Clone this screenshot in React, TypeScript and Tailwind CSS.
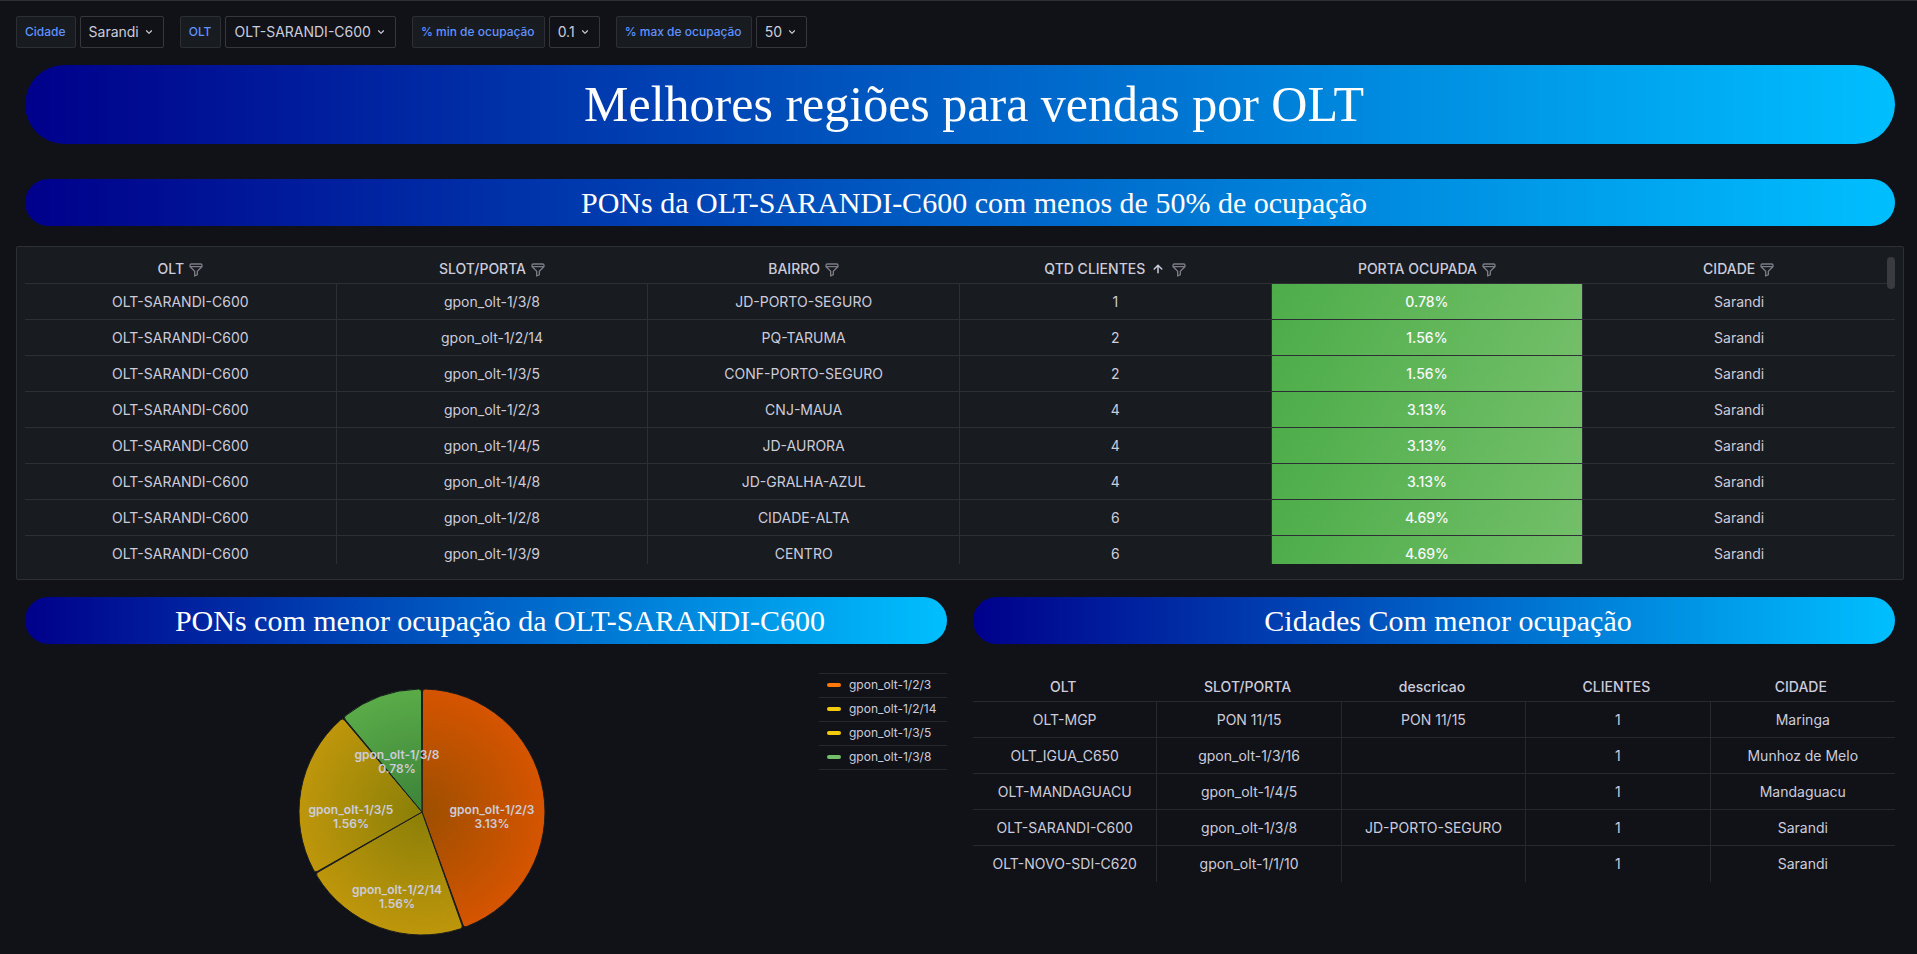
import type { ReactNode } from "react";

const variables = [
  { id: "cidade", label: "Cidade", value: "Sarandi" },
  { id: "olt", label: "OLT", value: "OLT-SARANDI-C600" },
  { id: "min", label: "% min de ocupação", value: "0.1" },
  { id: "max", label: "% max de ocupação", value: "50" },
];

const ponColumns = ["OLT", "SLOT/PORTA", "BAIRRO", "QTD CLIENTES", "PORTA OCUPADA", "CIDADE"];

const ponRows = [
  ["OLT-SARANDI-C600", "gpon_olt-1/3/8", "JD-PORTO-SEGURO", "1", "0.78%", "Sarandi"],
  ["OLT-SARANDI-C600", "gpon_olt-1/2/14", "PQ-TARUMA", "2", "1.56%", "Sarandi"],
  ["OLT-SARANDI-C600", "gpon_olt-1/3/5", "CONF-PORTO-SEGURO", "2", "1.56%", "Sarandi"],
  ["OLT-SARANDI-C600", "gpon_olt-1/2/3", "CNJ-MAUA", "4", "3.13%", "Sarandi"],
  ["OLT-SARANDI-C600", "gpon_olt-1/4/5", "JD-AURORA", "4", "3.13%", "Sarandi"],
  ["OLT-SARANDI-C600", "gpon_olt-1/4/8", "JD-GRALHA-AZUL", "4", "3.13%", "Sarandi"],
  ["OLT-SARANDI-C600", "gpon_olt-1/2/8", "CIDADE-ALTA", "6", "4.69%", "Sarandi"],
  ["OLT-SARANDI-C600", "gpon_olt-1/3/9", "CENTRO", "6", "4.69%", "Sarandi"],
];

const cityColumns = ["OLT", "SLOT/PORTA", "descricao", "CLIENTES", "CIDADE"];

const cityRows = [
  ["OLT-MGP", "PON 11/15", "PON 11/15", "1", "Maringa"],
  ["OLT_IGUA_C650", "gpon_olt-1/3/16", "", "1", "Munhoz de Melo"],
  ["OLT-MANDAGUACU", "gpon_olt-1/4/5", "", "1", "Mandaguacu"],
  ["OLT-SARANDI-C600", "gpon_olt-1/3/8", "JD-PORTO-SEGURO", "1", "Sarandi"],
  ["OLT-NOVO-SDI-C620", "gpon_olt-1/1/10", "", "1", "Sarandi"],
];

const slices = [
  { name: "gpon_olt-1/2/3", value: 3.13, fill: "url(#pie-orange)", swatch: "bg-[#ff780a]", x: 193, y: 125 },
  { name: "gpon_olt-1/2/14", value: 1.56, fill: "url(#pie-yellow)", swatch: "bg-[#f2cc0c]", x: 98, y: 205 },
  { name: "gpon_olt-1/3/5", value: 1.56, fill: "url(#pie-yellow)", swatch: "bg-[#f2cc0c]", x: 52, y: 125 },
  { name: "gpon_olt-1/3/8", value: 0.78, fill: "url(#pie-green)", swatch: "bg-[#73bf69]", x: 98, y: 70 },
];

function Icon({ path, className }: { path: string; className: string }) {
  return (
    <svg viewBox="0 0 24 24" fill="currentColor" aria-hidden="true" className={className}>
      <path d={path} />
    </svg>
  );
}

const FILTER =
  "M19,2H5A3,3,0,0,0,2,5V6.17a3,3,0,0,0,.25,1.2l0,.06a2.81,2.81,0,0,0,.59.86L9,14.41V21a1,1,0,0,0,.47.85A1,1,0,0,0,10,22a1,1,0,0,0,.45-.11l4-2A1,1,0,0,0,15,19V14.41l6.12-6.12a2.81,2.81,0,0,0,.59-.86l0-.06A3,3,0,0,0,22,6.17V5A3,3,0,0,0,19,2ZM13.29,13.29A1,1,0,0,0,13,14v4.38l-2,1V14a1,1,0,0,0-.29-.71L5.41,8H18.59ZM20,6H4V5A1,1,0,0,1,5,4H19a1,1,0,0,1,1,1Z";
const ARROW_UP =
  "M17.71,11.29l-5-5a1,1,0,0,0-.33-.21,1,1,0,0,0-.76,0,1,1,0,0,0-.33.21l-5,5a1,1,0,0,0,1.42,1.42L11,9.41V17a1,1,0,0,0,2,0V9.41l3.29,3.3a1,1,0,0,0,1.42,0A1,1,0,0,0,17.71,11.29Z";
const ANGLE_DOWN =
  "M17,9.17a1,1,0,0,0-1.41,0L12,12.71,8.46,9.17a1,1,0,0,0-1.41,0,1,1,0,0,0,0,1.42l4.24,4.24a1,1,0,0,0,1.42,0L17,10.59A1,1,0,0,0,17,9.17Z";

function Variable({ id, label, value }: { id: string; label: string; value: string }) {
  return (
    <div className="flex gap-1">
      <label
        htmlFor={id}
        className="flex h-8 items-center rounded-xs border border-[#2d2f34] bg-[#181b1f] pr-[9px] pl-2 text-xs font-medium text-[#5f92ff]"
      >
        {label}
      </label>
      <div className="relative flex">
        <select
          id={id}
          defaultValue={value}
          className="field-sizing-content h-8 appearance-none rounded-xs border border-[#36373c] bg-[#111217] pr-6 pl-2 text-sm"
        >
          <option>{value}</option>
        </select>
        <Icon path={ANGLE_DOWN} className="pointer-events-none absolute top-[9px] right-2 size-[14px]" />
      </div>
    </div>
  );
}

function Banner({ children, large = false }: { children: ReactNode; large?: boolean }) {
  const size = large ? "h-[79px] text-[50px]" : "h-[47px] pt-0.5 text-[30px]";
  const classes = `${size} flex items-center justify-center rounded-full bg-[linear-gradient(90deg,#00008b,#00bfff)] pl-7 font-['Liberation_Serif',serif] text-white`;
  return large ? <h1 className={classes}>{children}</h1> : <h2 className={classes}>{children}</h2>;
}

function point(angle: number, radius: number) {
  return `${123 + radius * Math.sin(angle)} ${123 - radius * Math.cos(angle)}`;
}

function Pie() {
  const total = slices.reduce((sum, s) => sum + s.value, 0);
  let angle = 0;
  const shapes = slices.map((s) => {
    const start = angle;
    angle += (s.value / total) * 2 * Math.PI;
    const r = 123;
    const gap = 0.004;
    const corner = 0.024;
    const a = start + gap;
    const b = angle - gap;
    const large = b - a > Math.PI ? 1 : 0;
    const d = `M123 123 L${point(a, r - 3)} Q${point(a, r)} ${point(a + corner, r)} A${r} ${r} 0 ${large} 1 ${point(b - corner, r)} Q${point(b, r)} ${point(b, r - 3)} Z`;
    return <path key={s.name} d={d} fill={s.fill} stroke="#181b1f" strokeWidth="1" />;
  });
  return (
    <svg viewBox="0 0 246 246" role="img" aria-label="Ocupação por PON" className="size-[246px] overflow-visible">
      <defs>
        <radialGradient id="pie-orange" gradientUnits="userSpaceOnUse" cx="123" cy="123" r="123">
          <stop offset="0" stopColor="#9c4f00" />
          <stop offset="1" stopColor="#d65400" />
        </radialGradient>
        <radialGradient id="pie-yellow" gradientUnits="userSpaceOnUse" cx="123" cy="123" r="123">
          <stop offset="0" stopColor="#8a7f08" />
          <stop offset="1" stopColor="#be960b" />
        </radialGradient>
        <radialGradient id="pie-green" gradientUnits="userSpaceOnUse" cx="123" cy="123" r="123">
          <stop offset="0" stopColor="#3c8239" />
          <stop offset="1" stopColor="#5aab48" />
        </radialGradient>
      </defs>
      {shapes}
      <g fill="#ccccdc" textAnchor="middle" className="text-xs font-semibold">
        {slices.map((s) => (
          <text key={s.name} x={s.x} y={s.y}>
            <tspan>{s.name}</tspan>
            <tspan x={s.x} dy="14">
              {s.value}%
            </tspan>
          </text>
        ))}
      </g>
    </svg>
  );
}

export default function App() {
  return (
    <div className="min-h-screen border-t border-[#2e3036] bg-[#111217] pt-[15px] pr-[13px] pl-4 font-['Inter',sans-serif] text-sm text-[#ccccdc]">
      <nav className="flex flex-wrap gap-4">
        {variables.map((v) => (
          <Variable key={v.id} {...v} />
        ))}
      </nav>

      <header className="mx-[9px] mt-[17px] flex flex-col gap-[35px]">
        <Banner large>Melhores regiões para vendas por OLT</Banner>
        <Banner>PONs da OLT-SARANDI-C600 com menos de 50% de ocupação</Banner>
      </header>

      <section className="relative mt-5 rounded-xs border border-[#2d2f34] bg-[#181b1f] px-2 pt-2 pb-[15px]">
        <div className="h-[309px] overflow-hidden">
          <table className="w-full table-fixed border-separate border-spacing-0 text-center">
            <thead>
              <tr className="h-[29px]">
                {ponColumns.map((c) => (
                  <th key={c} className="border-b border-[#2d2f34] p-0 font-medium">
                    <div className="flex items-center justify-center gap-1">
                      <button type="button" className="flex items-center gap-1">
                        {c}
                        {c === "QTD CLIENTES" && <Icon path={ARROW_UP} className="size-[18px]" />}
                      </button>
                      <button type="button" aria-label={`Filtrar ${c}`} className="pt-0.5 text-[#7b7c86]">
                        <Icon path={FILTER} className="size-4" />
                      </button>
                    </div>
                  </th>
                ))}
              </tr>
            </thead>
            <tbody>
              {ponRows.map((row) => (
                <tr key={row[1]} className="h-9">
                  {row.map((cell, i) => (
                    <td
                      key={i}
                      className={
                        i === 4
                          ? "border-r border-b border-[#2d2f34] bg-[linear-gradient(120deg,#4dad49,#73bf69)] bg-clip-padding p-0 font-medium text-[#f7f8fa]"
                          : "border-r border-b border-[#2d2f34] p-0 last:border-r-0"
                      }
                    >
                      {cell}
                    </td>
                  ))}
                </tr>
              ))}
            </tbody>
          </table>
        </div>
        <div className="absolute top-[10px] right-2 h-8 w-2 rounded-full bg-[#393b40]" />
      </section>

      <div className="mx-[9px] mt-[17px] grid grid-cols-2 gap-[26px]">
        <section>
          <Banner>PONs com menor ocupação da OLT-SARANDI-C600</Banner>
          <div className="mt-[29px] flex items-start">
            <div className="flex h-[278px] flex-1 items-center justify-center">
              <Pie />
            </div>
            <ul className="w-32 border-t border-[#26282d] text-xs">
              {slices.map((s) => (
                <li key={s.name} className="flex h-6 items-center gap-2 border-b border-[#26282d] pb-px pl-2">
                  <span className={`${s.swatch} h-1 w-[14px] rounded-full`} />
                  {s.name}
                </li>
              ))}
            </ul>
          </div>
        </section>

        <section>
          <Banner>Cidades Com menor ocupação</Banner>
          <table className="mt-[29px] w-full table-fixed border-separate border-spacing-0 text-center">
            <thead>
              <tr className="h-[29px]">
                {cityColumns.map((c) => (
                  <th key={c} className="border-b border-[#26282d] p-0 pr-1 font-medium">
                    {c}
                  </th>
                ))}
              </tr>
            </thead>
            <tbody>
              {cityRows.map((row) => (
                <tr key={row[0]} className="group h-9">
                  {row.map((cell, i) => (
                    <td key={i} className="border-r border-b border-[#26282d] p-0 group-last:border-b-0 last:border-r-0">
                      {cell}
                    </td>
                  ))}
                </tr>
              ))}
            </tbody>
          </table>
        </section>
      </div>
    </div>
  );
}
